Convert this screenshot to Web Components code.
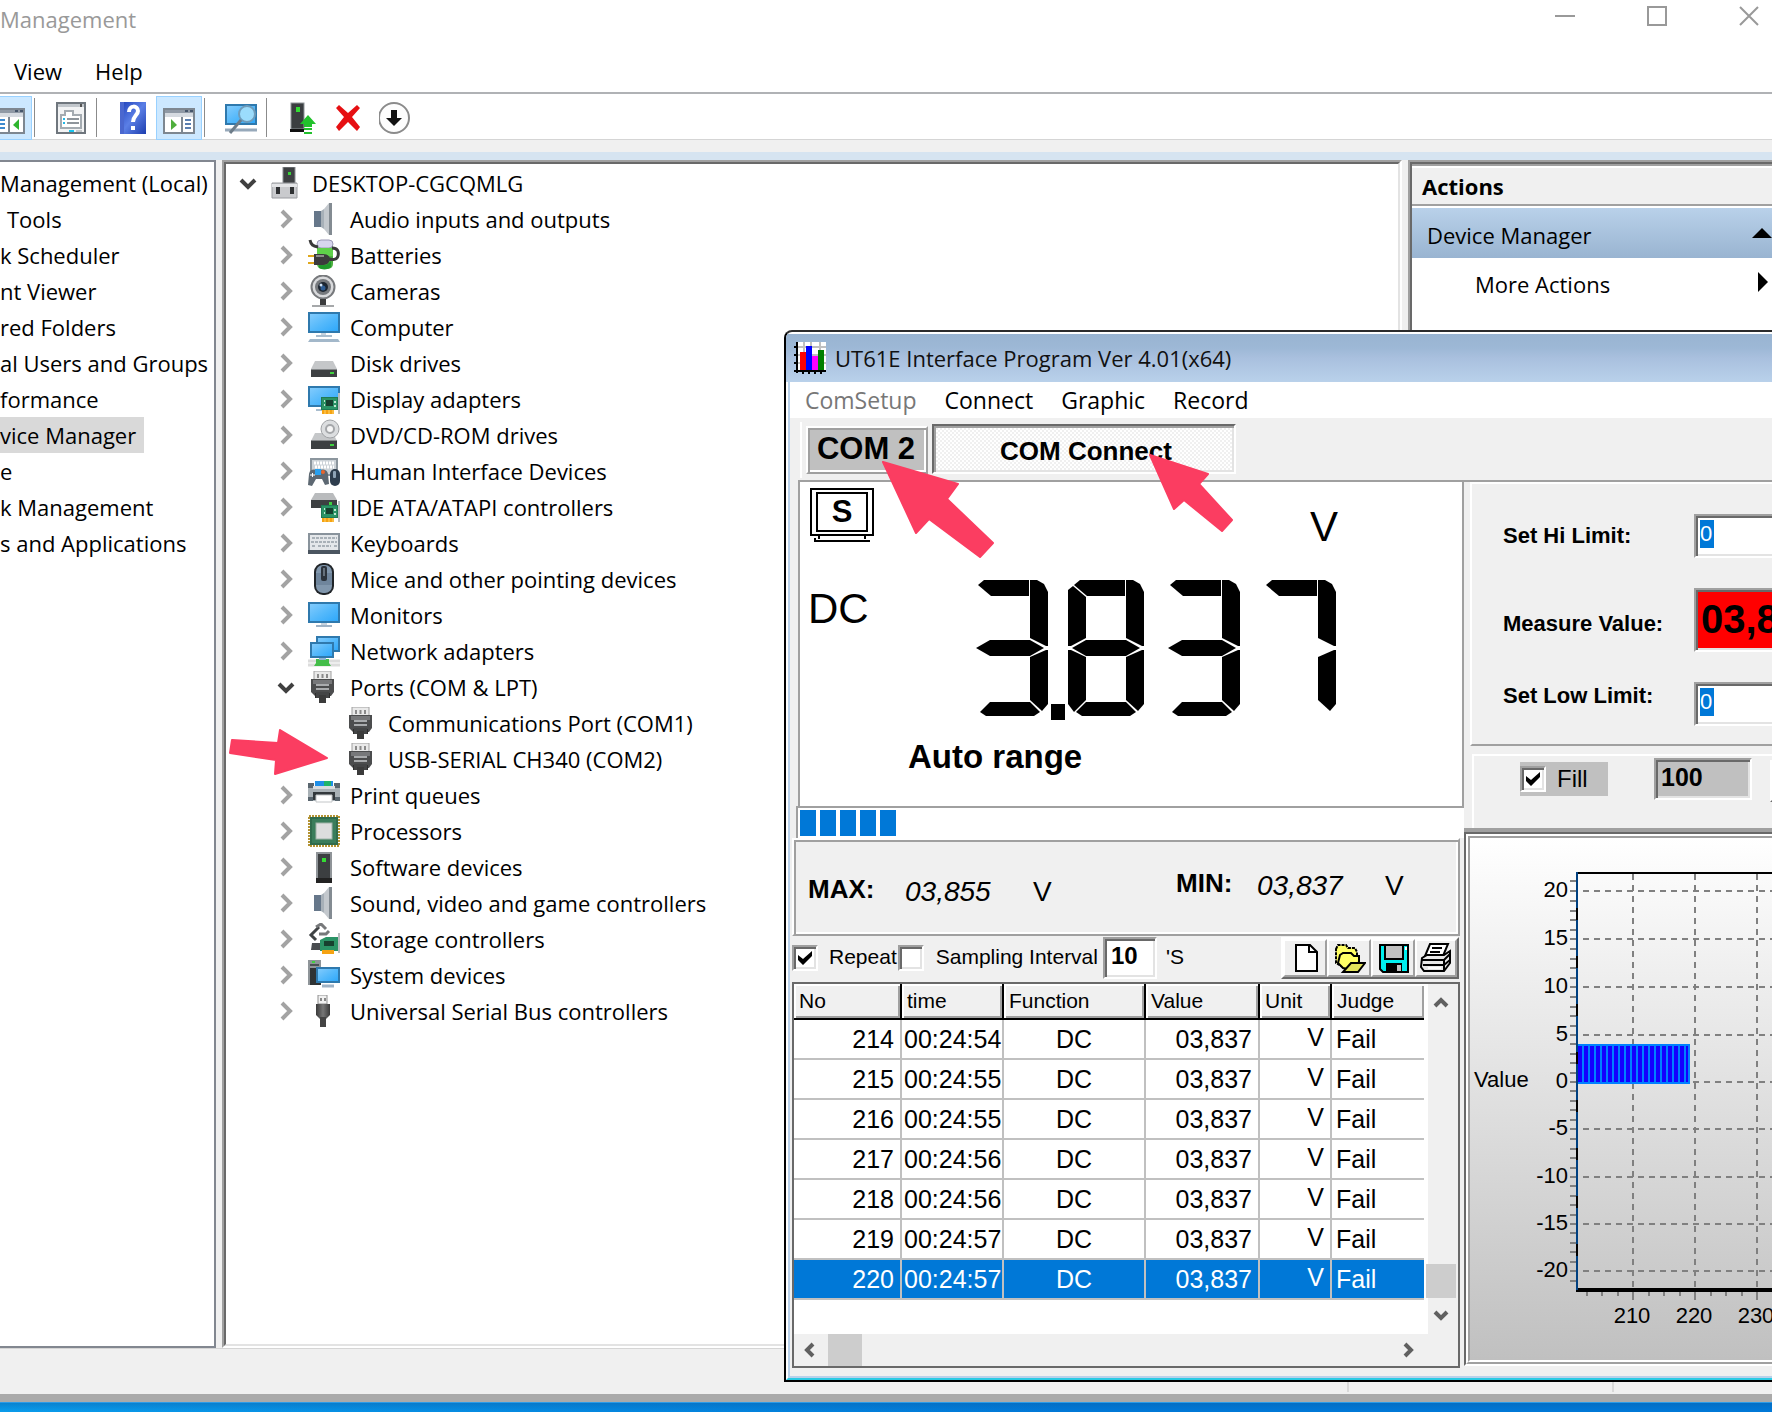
<!DOCTYPE html>
<html lang="en">
<head>
<meta charset="utf-8">
<title>Computer Management</title>
<style>
html, body { margin: 0; height: 100%; overflow: hidden; }
body { font-family: "Open Sans", "Noto Sans", sans-serif; font-size: 22px; color: #000; background: #f0f0f0; }
</style>
</head>
<body>
<desk-top>
  <mmc-window slot="back"></mmc-window>
  <meter-window slot="front"></meter-window>
</desk-top>
<script>
function define(name, html, setup) {
  const t = document.createElement('template');
  customElements.define(name, class extends HTMLElement {
    constructor() { super(); this.attachShadow({ mode: 'open' }); }
    connectedCallback() {
      if (this.shadowRoot.childNodes.length) return;
      t.innerHTML = typeof html === 'function' ? html(this) : html;
      this.shadowRoot.append(t.content.cloneNode(true));
      if (setup) setup(this);
    }
  });
}

/* ---------- icons, all on a 32 x 32 grid ---------- */
const DEFS = `<defs>
<linearGradient id="b" x1="0" y1="0" x2="1" y2="1"><stop offset="0" stop-color="#86cdfd"/><stop offset=".5" stop-color="#55b9fb"/><stop offset="1" stop-color="#2ba6fa"/></linearGradient>
<linearGradient id="g" x1="0" y1="0" x2="1" y2="0"><stop offset="0" stop-color="#6d7a86"/><stop offset=".5" stop-color="#d3d7da"/><stop offset="1" stop-color="#8b9298"/></linearGradient>
<linearGradient id="v" x1="0" y1="0" x2="0" y2="1"><stop offset="0" stop-color="#b4b6b9"/><stop offset="1" stop-color="#e6e7e9"/></linearGradient>
<linearGradient id="k" x1="0" y1="0" x2="1" y2="0"><stop offset="0" stop-color="#3a3a3a"/><stop offset=".5" stop-color="#777"/><stop offset="1" stop-color="#3a3a3a"/></linearGradient>
<linearGradient id="h" x1="0" y1="0" x2="1" y2="1"><stop offset="0" stop-color="#1d3fb8"/><stop offset=".5" stop-color="#5b7fe6"/><stop offset="1" stop-color="#1c3dae"/></linearGradient>
</defs>`;
const card = `<rect x="13" y="14" width="17" height="13" fill="#1f7a53"/><rect x="14" y="15" width="15" height="11" fill="#2b9366"/><rect x="18" y="17" width="7" height="6" fill="#17402f"/><path d="M16 18h1M16 22h1M26 19h2M26 23h2" stroke="#bfe6cf" stroke-width="2"/><rect x="14" y="27" width="12" height="4" fill="#f5a312"/><path d="M17 27v4M21 27v4M25 27v4" stroke="#ffd36a"/><rect x="30" y="10" width="2" height="21" fill="#b8bcbf"/>`;
const plug = `<rect x="6" y="0" width="17" height="9" fill="#e9e9e9" stroke="#a0a0a0"/><path d="M10 3v4M14.500 3v4M19 3v4" stroke="#8a8a8a" stroke-width="2"/><path d="M3 8h23v13l-3 4H7l-4-4z" fill="#4c4d4e"/><path d="M5 9h19v4H5z" fill="#77787a"/><path d="M8 14h13M8 18h13" stroke="#a9abad" stroke-width="2"/><rect x="7" y="22" width="3" height="5" fill="#2e2e2e"/><rect x="19" y="22" width="3" height="5" fill="#2e2e2e"/><rect x="8" y="21" width="13" height="6" fill="#444546"/><rect x="11" y="24" width="7" height="8" fill="#3b3b3b"/>`;
const speaker = `<path d="M6 9h8l10-9v32l-10-9H6z" fill="url(#g)"/><path d="M6 8h7v16H6z" fill="#66778a"/><path d="M13 8l3-2v20l-3-2z" fill="#a7b0b8"/><path d="M16 6l5-6v32l-5-6z" fill="#c3c8cd"/><rect x="21" y="0" width="3" height="32" fill="#838b92"/>`;
const winbox = `<rect x="1" y="7" width="30" height="24" fill="#fff" stroke="#7d8791" stroke-width="2"/><rect x="2" y="8" width="28" height="3" fill="#8f99a5"/><rect x="2" y="11" width="28" height="4" fill="#d5dae0"/><path d="M22 9h3M27 9h3" stroke="#46566b" stroke-width="2"/>`;
const ICONS = {
  pc: `<rect x="13" y="0" width="12" height="17" fill="#3e4143" stroke="#8a8e92"/><rect x="18" y="5" width="3" height="3" fill="#3ad13a"/><path d="M2 16h25v15H2z" fill="#c9cacd" stroke="#9a9ca0"/><path d="M2 17h25v3H2z" fill="#e4e5e7"/><rect x="6" y="20" width="4" height="7" fill="#2f3133"/><rect x="20" y="20" width="4" height="7" fill="#2f3133"/>`,
  speaker,
  battery: `<rect x="9" y="2" width="16" height="28" rx="5" fill="#4caf3f"/><rect x="9" y="1" width="16" height="8" rx="4" fill="#d7d6ee" stroke="#9a98b5"/><path d="M9 9h16v8H9z" fill="#5fd04a"/><path d="M11 24c4 3 8 3 12-2v6c-3 3-9 3-12 1z" fill="#1f9a2b"/><path d="M2 1c1 5 3 6 8 7M24 9c6 0 7 4 6 8s-6 4-9 3" fill="none" stroke="#3a3a3a" stroke-width="3"/><path d="M0 17h7M0 24h7" stroke="#e0a81c" stroke-width="2"/><path d="M6 15h9c5 0 7 3 7 5s-2 6-7 6H6z" fill="#3b3b3c"/><path d="M8 17h8" stroke="#8b8b8b" stroke-width="2"/>`,
  camera: `<circle cx="15" cy="12" r="11.500" fill="#d9dadc" stroke="#77797c" stroke-width="2"/><circle cx="15" cy="12" r="8" fill="#76797d"/><circle cx="15" cy="12" r="5" fill="#1d2631"/><circle cx="15" cy="13" r="2.500" fill="#2e5c93"/><circle cx="13" cy="10" r="1.500" fill="#cfe2f7"/><rect x="12" y="24" width="6" height="6" fill="#3b3c3d"/><path d="M4 31h22" stroke="#a6a8aa" stroke-width="2"/>`,
  computer: `<rect x="1" y="2" width="30" height="19" fill="url(#b)" stroke="#2f79ad" stroke-width="2"/><rect x="13" y="22" width="5" height="2" fill="#c7d3de"/><rect x="8" y="24" width="16" height="2" fill="#a9bdce"/><path d="M2 28h28l2 3H0z" fill="#a3b8ca"/>`,
  disk: `<path d="M7 14h18l4 8H3z" fill="#c5c7c9"/><rect x="3" y="22" width="26" height="8" fill="#3d4042"/><path d="M3 22.500h26" stroke="#85888a"/><rect x="22" y="25" width="4" height="2" fill="#3fd13f"/>`,
  display: `<rect x="1" y="4" width="30" height="19" fill="url(#b)" stroke="#2f79ad" stroke-width="2"/><path d="M8 27h6" stroke="#a9bdce" stroke-width="2"/>${card}`,
  dvd: `<path d="M7 14h18l4 8H3z" fill="#c5c7c9"/><circle cx="22" cy="10" r="9" fill="#dcdee0" stroke="#a1a3a6"/><circle cx="22" cy="10" r="4" fill="#f6f6f6" stroke="#a5a7aa" stroke-width="2"/><rect x="3" y="21" width="26" height="9" fill="#3d4042"/><path d="M3 21.500h26" stroke="#85888a"/><rect x="22" y="25" width="4" height="2" fill="#3fd13f"/>`,
  hid: `<rect x="3" y="4" width="26" height="16" fill="#cdd3d8" stroke="#8c969e" stroke-width="2"/><path d="M6 8h21M7 12h19" stroke="#fff" stroke-width="3" stroke-dasharray="2 1"/><path d="M1 19c1-5 4-5 9-4 5-1 9-1 10 4l1 10-4 1-3-6H8l-4 7-4-1z" fill="#5d6872"/><rect x="7" y="14" width="6" height="6" fill="#2aa0ee"/><circle cx="15" cy="17" r="2" fill="#e8652c"/><path d="M2 20h5M4.500 18v4" stroke="#fff"/><rect x="22" y="14" width="10" height="17" rx="5" fill="#2e3d4d"/><rect x="25" y="16" width="3" height="7" rx="1" fill="#8fa3b5"/>`,
  ide: `<path d="M7 2h18l4 7H3z" fill="#b9bbbd"/><rect x="3" y="9" width="26" height="8" fill="#3d4042"/>${card}<rect x="21" y="11" width="3" height="3" fill="#3fd13f"/>`,
  keyboard: `<rect x="1" y="7" width="30" height="17" fill="#e4e7ea" stroke="#89939c" stroke-width="2"/><path d="M4 11h25M3 15h26M4 19h3M10 19h13M26 19h3" stroke="#a9b1b8" stroke-width="2" stroke-dasharray="3 1"/><rect x="0" y="23" width="32" height="4" fill="#4b5560"/>`,
  mouse: `<rect x="6" y="0" width="20" height="32" rx="9" fill="#202428"/><rect x="8" y="2" width="16" height="28" rx="7" fill="#8197ad"/><path d="M8 10h16v12H8z" fill="#6f859c"/><rect x="13" y="3" width="6" height="15" rx="2" fill="#2c333b"/><rect x="15" y="5" width="2" height="8" fill="#66717c"/>`,
  monitor: `<rect x="1" y="4" width="30" height="19" fill="url(#b)" stroke="#2f79ad" stroke-width="2"/><rect x="13" y="24" width="6" height="2" fill="#c7d3de"/><rect x="8" y="26" width="16" height="2" fill="#9fb3c6"/>`,
  network: `<rect x="9" y="2" width="22" height="14" fill="url(#b)" stroke="#2f79ad" stroke-width="2"/><rect x="3" y="8" width="22" height="14" fill="url(#b)" stroke="#2f79ad" stroke-width="2"/><path d="M0 26h32M0 30h32" stroke="#dcdcdc" stroke-width="3"/><path d="M8 24h13v4l2 3H6l2-3z" fill="#44bd49"/><rect x="11" y="23" width="7" height="2" fill="#8fb3cf"/>`,
  port: plug,
  printer: `<rect x="7" y="2" width="18" height="8" fill="#1f8fe8"/><rect x="16" y="2" width="7" height="8" fill="#1fb56a"/><path d="M0 9h32v13H0z" fill="#a9b1b6"/><path d="M0 4h6v5H0zM26 4h6v5h-6z" fill="#59656e"/><rect x="5" y="7" width="22" height="3" fill="#d9dde0"/><path d="M5 13h22v8H5z" fill="#33383c"/><path d="M8 16h16v7H8z" fill="#fff" stroke="#c3c6c8"/><path d="M0 18h5v4H0zM27 18h5v4h-5z" fill="#59656e"/>`,
  cpu: `<rect x="1" y="1" width="30" height="30" fill="none" stroke="#b49434" stroke-width="2" stroke-dasharray="2 1"/><rect x="2" y="2" width="28" height="28" fill="#2f6b4c"/><rect x="4" y="4" width="24" height="24" fill="#3a7d5b"/><rect x="8" y="8" width="16" height="16" fill="#dcdddd" stroke="#9fb3a8"/>`,
  tower: `<rect x="9" y="2" width="14" height="28" fill="#3c3f41" stroke="#8f9498" stroke-width="2"/><rect x="14" y="7" width="4" height="4" fill="#33dd33"/><path d="M8 27h16v5H8z" fill="#222"/>`,
  storage: `<path d="M11 4l-8 8 5 5" fill="none" stroke="#3f4244" stroke-width="3"/><path d="M8 4l5-3 5 5M11 11h7l3-3" fill="none" stroke="#77797b" stroke-width="3"/><path d="M4 20h10l2 7H3z" fill="#4a4d50"/><path d="M12 17l6-3h12v14H12z" fill="#2b9366"/><path d="M16 18h10v5H16z" fill="#17402f"/><rect x="14" y="27" width="12" height="4" fill="#f5a312"/><rect x="30" y="10" width="2" height="20" fill="#b8bcbf"/>`,
  system: `<rect x="0" y="1" width="13" height="25" fill="#8f9599"/><rect x="2" y="9" width="11" height="17" fill="#2f3335"/><path d="M2 6h9" stroke="#4a4f52" stroke-width="2"/><rect x="4" y="2" width="3" height="2" fill="#3fd13f"/><rect x="9" y="9" width="22" height="14" fill="url(#b)" stroke="#2f79ad" stroke-width="2"/><path d="M14 27h12" stroke="#9fb3c6" stroke-width="3"/>`,
  usb: `<rect x="10" y="0" width="9" height="9" fill="#f1f1f1" stroke="#8f8f8f"/><path d="M13 3v3M17 3v3" stroke="#888" stroke-width="2"/><path d="M8 9h14v11l-4 4h-6l-4-4z" fill="url(#k)"/><rect x="12" y="22" width="6" height="10" fill="#444"/>`,
  /* toolbar */
  showtree: `${winbox}<path d="M16 15v15" stroke="#7d8791" stroke-width="2"/><path d="M5 18h7M5 22h7M5 26h7" stroke="#3e8bd0" stroke-width="2"/><path d="M26 17v11l-6-5z" fill="#2fb52f"/>`,
  props: `<rect x="2" y="1" width="28" height="30" fill="#f2f3f4" stroke="#6f767d" stroke-width="2"/><rect x="3" y="2" width="26" height="3" fill="#c1c6cb"/><path d="M26 2v3" stroke="#555" stroke-width="2"/><path d="M6 13h4v-4h8v4h8v13H6z" fill="#fff" stroke="#a4abb1" stroke-width="2"/><path d="M12 17h12M12 21h12" stroke="#8e959b" stroke-width="2"/><path d="M8 17h2M8 21h2" stroke="#22b8e8" stroke-width="2"/><path d="M14 29h5" stroke="#16c4ee" stroke-width="2"/><path d="M21 29h6" stroke="#c4c7c9" stroke-width="2"/>`,
  help: `<rect x="3" y="0" width="26" height="32" fill="url(#h)"/><path d="M3 0h4v32H3z" fill="#4a67cf"/><path d="M12 10c0-7 9-7 9-1 0 4-5 5-5 11" fill="none" stroke="#fff" stroke-width="4"/><rect x="14" y="24" width="4" height="4" fill="#fff"/>`,
  showact: `${winbox}<path d="M19 15v15" stroke="#7d8791" stroke-width="2"/><path d="M22 18h6M22 22h6M22 26h6" stroke="#5b7fb0" stroke-width="2"/><path d="M8 17v11l6-5z" fill="#4fae3d"/>`,
  scan: `<rect x="1" y="3" width="30" height="19" fill="url(#b)" stroke="#2f79ad" stroke-width="2"/><path d="M0 28h32" stroke="#97a9ba" stroke-width="3"/><circle cx="22" cy="12" r="8" fill="#9bdcfc" stroke="#6e9cbb" stroke-width="2"/><path d="M16 18L5 31" stroke="#6d7c88" stroke-width="3"/>`,
  update: `<rect x="4" y="1" width="13" height="26" fill="#3b3e40" stroke="#8f9498"/><rect x="9" y="5" width="4" height="5" fill="#33dd33"/><path d="M3 27h14v3H3z" fill="#111"/><path d="M21 13l8 9h-4v3h-8v-3h-4z" fill="#22c12c"/><path d="M17 27h8M17 31h8" stroke="#22c12c" stroke-width="2"/>`,
  remove: `<path d="M3 6l3-3 9 8 9-8 3 3-8 9 8 10-3 4-9-9-9 9-3-4 8-10z" fill="#e60f12"/>`,
  disable: `<circle cx="15" cy="16" r="15" fill="#fdfdfd" stroke="#8b8b8b" stroke-width="2"/><path d="M12 8h6v8h5l-8 8-8-8h5z" fill="#111"/>`,
  /* meter program */
  bars: `<rect x="2" y="0" width="30" height="29" fill="#fff"/><path d="M2 5h30M2 13h30M2 21h30M10 0v29M17 0v29M26 0v29" stroke="#c0c0c0" stroke-width="2"/><path d="M6 10h6v18H6z" fill="#f00"/><path d="M12 4h6v24h-6z" fill="#00f"/><path d="M18 14h6v14h-6z" fill="#f0f"/><path d="M24 8h6v20h-6z" fill="#008000"/><path d="M3 0v31M0 29h32M0 5h2M0 13h2M0 21h2M9 30v2M15 30v2M21 30v2M27 30v2" stroke="#000" stroke-width="2"/>`,
  newdoc: `<path d="M6 3h14l7 7v19H6z" fill="#fff" stroke="#000" stroke-width="2"/><path d="M19 3v7h8" fill="none" stroke="#000" stroke-width="2"/>`,
  open: `<path d="M2 7l2-4h8l2 3h7l2 4v6H11l-4 8-5-3z" fill="#ff6" stroke="#000" stroke-width="2" stroke-dasharray="3 1"/><path d="M6 13l3-2h8l3 3h5v6l-7 8-9-2-5-5z" fill="#ff6" stroke="#000" stroke-width="2"/><path d="M17 21h14l-7 9H9z" fill="#e3e35a" stroke="#000" stroke-width="2"/>`,
  save: `<path d="M2 3h28v27H5l-3-3z" fill="#00f0f0" stroke="#000" stroke-width="2"/><rect x="7" y="3" width="18" height="14" fill="#c0c0c0" stroke="#000" stroke-width="2"/><rect x="8" y="21" width="16" height="9" fill="#000"/><rect x="19" y="23" width="4" height="6" fill="#c0c0c0"/><rect x="27" y="5" width="2" height="3" fill="#fff"/>`,
  print: `<path d="M10 2h18l-5 12H5z" fill="#fff" stroke="#000" stroke-width="2"/><path d="M12 6h10M10 10h10" stroke="#000" stroke-width="2"/><path d="M2 16l5-3h17l6-4v12l-6 8H4l-3-4z" fill="#e8e8e8" stroke="#000" stroke-width="2"/><path d="M2 18h22l6-6M3 23h21l6-5M24 18v10" fill="none" stroke="#000" stroke-width="2"/><path d="M8 26h13" stroke="#fff" stroke-width="2"/>`,
  lamp: `<path d="M1 1h62v46H1zM7 5h50v38H7z" fill="none" stroke="#000" stroke-width="2"/><path d="M9 48v3M55 48v3M5 50v3h55" fill="none" stroke="#000" stroke-width="2"/>`
};
define('glyph-icon', el => `<style>:host{display:block;width:32px;height:32px;flex:none}svg{display:block;width:100%;height:100%}</style>
<svg viewBox="0 0 32 32" aria-hidden="true">${DEFS}${ICONS[el.getAttribute('name')] || ''}</svg>`);

/* ---------- desktop ---------- */
define('desk-top', `<style>
:host{display:flex;flex-direction:column;height:100vh;position:relative;overflow:hidden}
.back{flex:1;display:flex;min-height:0}
.edge{height:8px;background:#aaa}
.sky{height:10px;background:linear-gradient(#0b5fa866,#0b5fa800 8px),linear-gradient(90deg,#0a9bea,#0078d7 60%);border-top:1px solid #2b9be8;box-sizing:border-box}
.front{position:absolute;left:784px;right:0;top:330px}
.marks{position:absolute;inset:0;width:100%;height:100%;pointer-events:none}
</style>
<div class="back"><slot name="back"></slot></div>
<div class="edge"></div><div class="sky"></div>
<div class="front"><slot name="front"></slot></div>
<svg class="marks" aria-hidden="true"><g fill="#fb3d61" stroke="#fb3d61" stroke-width="2" stroke-linejoin="round">
<path d="M232 740l46 3 2-13 47 28-52 16 1-14-46-7z"/>
<path d="M883 462l75 22-11 15 46 44-13 14-51-38-13 14z"/>
<path d="M1150 455l58 19-9 10 33 36-10 11-38-31-10 9z"/></g></svg>`);

/* ---------- management console ---------- */
define('tool-button', el => `<style>
:host{display:block}
button{width:46px;height:44px;padding:0 6px;border:1px solid transparent;background:none;display:block}
:host([on]) button{background:#cce8ff;border-color:#99d1ff}
</style><button aria-label="${el.getAttribute('label')}"><glyph-icon name="${el.getAttribute('icon')}"></glyph-icon></button>`);

define('side-item', `<style>
:host{display:flex;height:36px;align-items:center;white-space:nowrap}
span{line-height:36px;padding-right:8px}
:host([indent]) span{padding-left:7px}
:host([selected]) span{background:#d9d9d9}
</style><span><slot></slot></span>`);

define('tree-item', el => {
  const s = el.getAttribute('state');
  const arrow = s === 'open'
    ? '<path d="M3 7l7 7 7-7" fill="none" stroke="#404040" stroke-width="4"/>'
    : s === 'closed' ? '<path d="M6 2l8 8-8 8" fill="none" stroke="#a3a3a3" stroke-width="4"/>' : '';
  return `<style>
:host{display:flex;height:36px;align-items:center;white-space:nowrap;padding-left:calc(38px*var(--level))}
.tog{width:44px;height:36px;border:0;background:none;padding:0;display:grid;place-items:center}
.tog svg{width:20px;height:20px;display:block}
.name{padding-left:10px;line-height:36px}
</style>${arrow ? `<button class="tog" aria-label="Toggle"><svg viewBox="0 0 20 20">${arrow}</svg></button>` : '<span class="tog"></span>'}
<glyph-icon name="${el.getAttribute('icon')}"></glyph-icon><span class="name"><slot></slot></span>`;
}, el => el.style.setProperty('--level', el.getAttribute('level')));

define('actions-pane', `<style>
:host{display:block;border:2px solid #a0a0a0;border-right:0;background:#fff;overflow:hidden}
.in{border:2px solid #696969;border-right:0;border-bottom:0;height:100%}
h2{margin:0;font-size:22px;line-height:40px;height:38px;padding-left:10px;background:#f0f0f0;border-top:2px solid #a0a0a0;border-bottom:2px solid #a0a0a0;box-shadow:inset 0 2px #fff}
.group,.more{display:flex;justify-content:space-between;align-items:center;width:100%;box-sizing:border-box;border:0;font:inherit;color:inherit;background:none;padding:4px 0 0 15px}
.group{height:50px;margin-top:2px;background:linear-gradient(#b9d1ea,#99b4d1)}
.more{height:52px;padding:0 4px 0 63px}
svg{display:block}
</style><div class="in"><h2>Actions</h2>
<button class="group">Device Manager<svg width="20" height="14"><path d="M0 10L10 0l10 10z"/></svg></button>
<button class="more">More Actions<svg width="10" height="24"><path d="M0 0l10 10L0 20z"/></svg></button></div>`);

const TREE = [
  [0, 'open', 'pc', 'DESKTOP-CGCQMLG'], [1, 'closed', 'speaker', 'Audio inputs and outputs'],
  [1, 'closed', 'battery', 'Batteries'], [1, 'closed', 'camera', 'Cameras'],
  [1, 'closed', 'computer', 'Computer'], [1, 'closed', 'disk', 'Disk drives'],
  [1, 'closed', 'display', 'Display adapters'], [1, 'closed', 'dvd', 'DVD/CD-ROM drives'],
  [1, 'closed', 'hid', 'Human Interface Devices'], [1, 'closed', 'ide', 'IDE ATA/ATAPI controllers'],
  [1, 'closed', 'keyboard', 'Keyboards'], [1, 'closed', 'mouse', 'Mice and other pointing devices'],
  [1, 'closed', 'monitor', 'Monitors'], [1, 'closed', 'network', 'Network adapters'],
  [1, 'open', 'port', 'Ports (COM &amp; LPT)'], [2, '', 'port', 'Communications Port (COM1)'],
  [2, '', 'port', 'USB-SERIAL CH340 (COM2)'], [1, 'closed', 'printer', 'Print queues'],
  [1, 'closed', 'cpu', 'Processors'], [1, 'closed', 'tower', 'Software devices'],
  [1, 'closed', 'speaker', 'Sound, video and game controllers'], [1, 'closed', 'storage', 'Storage controllers'],
  [1, 'closed', 'system', 'System devices'], [1, 'closed', 'usb', 'Universal Serial Bus controllers']
];
define('mmc-window', `<style>
:host{display:flex;flex-direction:column;flex:1;min-width:0;background:#f0f0f0}
header{display:flex;justify-content:space-between;height:38px;align-items:center;background:#fff;color:#999}
.sys{display:flex;gap:14px;align-self:flex-start}
.sys button{width:78px;height:32px;border:0;background:none;padding:0;display:grid;place-items:center}
.sys button:last-child{margin-right:-16px}
nav{display:flex;gap:33px;height:42px;padding:12px 14px 0;background:#fff;align-items:center;border-bottom:2px solid #b0b2b5}
nav button{border:0;background:none;padding:0;font:inherit;color:inherit}
.tools{display:flex;background:#fff;height:43px;padding-top:2px;border-bottom:1px solid #d5d5d5}
.tools tool-button:first-child{margin-left:-14px}
.tools i{width:13px;margin-left:2px;border-left:1px solid #8b8b8b;margin-top:2px;margin-bottom:2px}
.band{height:8px;margin-top:12px;background:#d6e4f1}
.panes{flex:1;display:flex;gap:6px;min-height:0}
.side{width:214px;overflow:hidden;background:#fff;border:2px solid #828790;border-left:0;padding-top:3px;box-sizing:content-box}
.tree{flex:1;min-width:0;border:2px solid;border-color:#a0a0a0 #fff #fff #a0a0a0;background:#fff}
.tree div{border:2px solid;border-color:#696969 #e3e3e3 #e3e3e3 #696969;height:100%;box-sizing:border-box;overflow:hidden;padding-top:1px}
actions-pane{width:362px}
footer{height:45px;border-top:1px solid #d5d5d5;display:flex}
footer span{border-right:2px solid #d9d9d9;margin-bottom:2px}
footer span:first-child{width:1347px}footer span:last-child{width:263px}
</style>
<header><span>Management</span><div class="sys">
<button aria-label="Minimize"><svg width="20" height="20"><path d="M0 10h20" stroke="#999" stroke-width="2"/></svg></button>
<button aria-label="Maximize"><svg width="20" height="20"><path d="M1 1h18v18H1z" fill="none" stroke="#999" stroke-width="2"/></svg></button>
<button aria-label="Close"><svg width="20" height="20"><path d="M1 1l18 18M19 1L1 19" stroke="#999" stroke-width="2"/></svg></button></div></header>
<nav><button>View</button><button>Help</button></nav>
<div class="tools">
<tool-button on icon="showtree" label="Show tree"></tool-button><i></i>
<tool-button icon="props" label="Properties"></tool-button><i></i>
<tool-button icon="help" label="Help"></tool-button>
<tool-button on icon="showact" label="Show actions"></tool-button><i></i>
<tool-button icon="scan" label="Scan"></tool-button><i></i>
<tool-button icon="update" label="Update driver"></tool-button>
<tool-button icon="remove" label="Uninstall"></tool-button>
<tool-button icon="disable" label="Disable"></tool-button></div>
<div class="band"></div>
<div class="panes"><div class="side">
<side-item>Management (Local)</side-item><side-item indent>Tools</side-item><side-item>k Scheduler</side-item>
<side-item>nt Viewer</side-item><side-item>red Folders</side-item><side-item>al Users and Groups</side-item>
<side-item>formance</side-item><side-item selected>vice Manager</side-item><side-item>e</side-item>
<side-item>k Management</side-item><side-item>s and Applications</side-item></div>
<div class="tree"><div>${TREE.map(r => `<tree-item level="${r[0]}" state="${r[1]}" icon="${r[2]}">${r[3]}</tree-item>`).join('')}</div></div>
<actions-pane></actions-pane></div>
<footer><span></span><span></span></footer>`);

/* ---------- seven segment readout ---------- */
const SEG = {
  a: '6px 5px,12px 0,57px 0,57px 16px,19px 16px',
  b: '58px 0,65px 0,72px 4px,76px 12px,76px 66px,74px 66px,58px 58px',
  c: '58px 77px,74px 70px,76px 70px,76px 124px,70px 131px,58px 120px',
  d: '18px 122px,58px 122px,68px 132px,62px 136px,14px 136px,8px 132px',
  e: '0 70px,3px 70px,18px 77px,18px 120px,6px 132px,0 124px',
  f: '0 10px,5px 6px,18px 17px,18px 58px,3px 66px,0 66px',
  g: '4px 68px,18px 60px,58px 60px,72px 68px,58px 76px,18px 76px'
};
const ON = { 3: 'abcdg', 8: 'abcdefg', 7: 'abc' };
define('seven-segment', el => `<style>
:host{display:flex;gap:20px}
.digit{display:grid;width:76px;height:140px}
.digit i{grid-area:1/1;background:#000}
.point{width:14px;height:16px;background:#000;margin:124px -17px 0}
${Object.keys(SEG).map(k => `.seg-${k}{clip-path:polygon(${SEG[k]})}`).join('')}
</style>${[...el.getAttribute('value')].map(c => c === '.' ? '<b class="point"></b>' : `<div class="digit">${[...ON[c]].map(s => `<i class="seg-${s}"></i>`).join('')}</div>`).join('')}`,
  el => { el.setAttribute('role', 'img'); el.setAttribute('aria-label', el.getAttribute('value')); });

/* ---------- controls of the meter program ---------- */
const CHECK = `input[type=checkbox]{appearance:none;margin:0;width:26px;height:26px;box-sizing:border-box;background:#fff;border:2px solid;border-color:#a0a0a0 #fff #fff #a0a0a0;box-shadow:inset 2px 2px #696969,inset -2px -2px #e3e3e3;display:grid;place-items:center;flex:none}
input[type=checkbox]:checked::before{content:"";width:14px;height:14px;background:#000;clip-path:polygon(0 4px,5px 8px,14px 0,14px 5px,5px 14px,0 9px)}`;
const SUNK = `border:2px solid;border-color:#a0a0a0 #fff #fff #a0a0a0;box-shadow:inset 2px 2px #696969,inset -2px -2px #e3e3e3;border-radius:0;outline:0;box-sizing:border-box;`;

define('record-table', `<style>
:host{display:grid;grid-template-columns:1fr 32px;grid-template-rows:350px 32px;border:2px solid #696969;background:#f0f0f0}
.view{background:#fff;overflow:hidden}
table{table-layout:fixed;border-collapse:separate;border-spacing:0;width:630px}
th{height:36px;box-sizing:border-box;padding:0 0 0 5px;font-size:21px;font-weight:400;text-align:left;background:#f0f0f0;border-right:2px solid #000;border-bottom:2px solid #000;box-shadow:inset 2px 2px #fff,inset -2px -2px #a0a0a0}
th:last-child{border-right:0}
td{height:40px;box-sizing:border-box;padding:0 6px 0 2px;font-size:25px;border-right:2px solid #c0c0c0;border-bottom:2px solid #c0c0c0;white-space:nowrap;line-height:36px}
td:last-child{border-right:0;padding-left:4px}
.r{text-align:right}
td.c{text-align:center;padding:0 2px}
td.u{padding:0 6px 4px 0;line-height:32px}
.sel td{background:#0078d7;color:#fff}
.v,.h{display:flex;align-items:center;justify-content:space-between}
.v{flex-direction:column;border-left:2px solid #fff;padding:10px 4px 10px 0}
.v svg,.h svg{display:block}
.v b{width:30px;height:34px;background:#cdcdcd;margin-top:auto;margin-bottom:10px}
.h{padding:0 10px 0 8px;justify-content:flex-start;gap:10px}
.h b{width:34px;height:32px;background:#cdcdcd}
.h svg:last-child{margin-left:auto}
path{fill:none;stroke:#606060;stroke-width:4}
</style>
<div class="view"><table><colgroup><col style="width:108px"><col style="width:102px"><col style="width:142px"><col style="width:114px"><col style="width:72px"><col style="width:92px"></colgroup>
<thead><tr><th>No</th><th>time</th><th>Function</th><th>Value</th><th>Unit</th><th>Judge</th></tr></thead><tbody>
${[[214, '00:24:54'], [215, '00:24:55'], [216, '00:24:55'], [217, '00:24:56'], [218, '00:24:56'], [219, '00:24:57'], [220, '00:24:57']].map(r => `<tr${r[0] === 220 ? ' class="sel"' : ''}><td class="r">${r[0]}</td><td>${r[1]}</td><td class="c">DC</td><td class="r">03,837</td><td class="r u">V</td><td>Fail</td></tr>`).join('')}
</tbody></table></div>
<div class="v"><svg width="16" height="16"><path d="M2 12l6-6 6 6"/></svg><b></b><svg width="16" height="16"><path d="M2 4l6 6 6-6"/></svg></div>
<div class="h"><svg width="16" height="16"><path d="M11 2L5 8l6 6"/></svg><b></b><svg width="16" height="16"><path d="M5 2l6 6-6 6"/></svg></div>`);

define('value-chart', () => {
  const ys = [53, 101, 149, 197, 244, 291, 339, 386, 433], xs = [163, 225, 287, 349];
  let g = '', t = '', m = '';
  ys.forEach((y, i) => {
    g += `<path d="M102 ${y}h2000"/>`;
    t += `<text x="98" y="${y + 6}" text-anchor="end">${20 - i * 5}</text>`;
    if (i) for (let k = 1; k < 5; k++) m += `M100 ${Math.round(y - k * 9.5)}h6`;
  });
  m += 'M100 43h6M100 443h6';
  xs.forEach((x, i) => {
    g += `<path d="M${x} 36v416"/>`;
    t += `<text x="${x - 1}" y="485" text-anchor="middle">${210 + i * 10}</text>`;
    m += `M${x} 452v10`;
    [15, 31, 46].forEach(d => m += `M${x - d} 452v6`);
  });
  let bars = '';
  for (let x = 108; x < 214; x += 6) bars += `M${x + 5} 206v40`;
  return `<style>:host{display:block;background:linear-gradient(#fff,#c0c0c0)}
svg{display:block;width:100%;height:522px}text{font-size:22px;fill:#000}</style>
<svg><g stroke="#808080" stroke-width="2" stroke-dasharray="6 5" fill="none">${g}</g>
<path d="${m}M100 53h6M100 101h6M100 149h6M100 197h6M100 244h6M100 291h6M100 339h6M100 386h6M100 433h6" stroke="#808080" stroke-width="2"/>
<path d="M108 206h111v40H108z" fill="#1400ff"/><path d="${bars}M108 207h111v38H108" stroke="#0080ff" stroke-width="2" fill="none"/>
<path d="M106 35h2000" stroke="#000" stroke-width="2"/><path d="M106 452h2000" stroke="#000" stroke-width="4"/>
<path d="M107 34v418" stroke="#000" stroke-width="2"/><path d="M107 34v418" stroke="#004080" stroke-width="2" stroke-dasharray="36 12"/>
${t}<text x="4" y="249">Value</text></svg>`;
});

define('meter-window', `<style>
:host{display:block;border:2px solid #000;border-top-color:#2c2c2c;border-right:0;border-top-left-radius:8px;background:#fff;overflow:hidden;font-family:"Liberation Sans",Arial,sans-serif;white-space:nowrap}
header{display:flex;align-items:center;gap:9px;height:48px;margin-top:2px;padding-left:8px;background:linear-gradient(#99b4d1 0,#9db8d6 14px,#a9c0de 24px,#b9d1ea);font-family:"Open Sans","Noto Sans",sans-serif;font-size:22px;color:#111}
main{border:2px solid #fff;border-right:0;border-top:0;border-bottom:2px solid #2bcbe4}
.body{border-left:2px solid #b9d1ea;border-bottom:2px solid #b9d1ea;background:#f0f0f0}
nav{display:flex;gap:28px;height:36px;align-items:center;background:#fff;padding-left:15px;font-family:"Open Sans","Noto Sans",sans-serif;font-size:23px}
nav button{border:0;background:none;padding:0;font:inherit;color:#000}
nav button:disabled{color:#777}
.bar{display:flex;gap:4px;height:56px;margin:4px 0 2px 10px;border-left:2px solid #fff;padding:2px 0 0 4px;box-sizing:border-box}
.bar button{font-family:inherit;font-weight:700;color:#000;box-sizing:border-box}
.com{width:122px;height:48px;margin-top:2px;padding:0 2px 2px 0;font-size:31px;line-height:40px;background:#c0c0c0;border:2px solid;border-color:#fff #a0a0a0 #a0a0a0 #fff;box-shadow:inset 2px 2px #a0a0a0,inset -2px -2px #fff}
.con{width:304px;height:50px;font-size:26px;padding:4px 0 0 4px;border:2px solid;border-color:#696969 #fff #fff #696969;box-shadow:inset 2px 2px #a0a0a0,inset -2px -2px #e3e3e3;background:repeating-conic-gradient(#fff 0 25%,#f0f0f0 0 50%) 0 0/4px 4px}
.cols{display:flex}
.left{width:674px;flex:none}
.lcd{margin-left:8px;height:326px;box-sizing:border-box;border:2px solid #a0a0a0;border-bottom:0;background:#fff;padding:6px 10px 0 8px;display:grid;grid-template:76px 136px 1fr/160px 1fr}
.lamp{display:grid;width:64px;height:54px;margin-left:2px}
.lamp>*{grid-area:1/1}
.lamp b{text-align:center;font-size:31px;line-height:48px}
.u{font-size:42px;justify-self:end;margin-right:114px;line-height:78px}
.fn{font-size:42px;line-height:48px;margin-top:21px}
seven-segment{margin-left:4px;margin-top:16px}
.range{grid-column:1/3;font-size:33px;font-weight:700;margin:38px 0 0 100px}
.prog{margin-left:6px;height:32px;box-sizing:border-box;border:2px solid #a0a0a0;border-right:0;border-bottom:0;background:#fff;padding:2px;display:flex;gap:4px}
.prog i{width:16px;height:26px;background:#0078d7}
.stats{margin:0 4px 0 2px;height:98px;box-sizing:border-box;border:2px solid;border-color:#fff #a0a0a0 #a0a0a0 #fff;box-shadow:inset 2px 2px #a0a0a0,inset -2px -2px #fff;display:flex;align-items:center;padding-left:14px}
.stats div{display:flex;align-items:center;font-size:28px}
.stats b{font-size:26px;width:97px;padding-bottom:6px}.stats .n b{width:81px}
.stats em{width:128px}
.x{width:368px;padding-top:10px}.n{padding-bottom:2px}
.opts{display:flex;align-items:center;height:46px;padding:0 5px 2px 2px;box-sizing:border-box;font-size:21px}
${CHECK}
.opts label{padding:0 1px 3px 11px}
.opts .l2{padding:0 5px 3px 12px}
.num{${SUNK}width:54px;height:42px;font:700 24px "Liberation Sans",Arial,sans-serif;padding:0 0 4px 6px;background:#fff}
.sec{padding:0 0 3px 9px}
.btns{display:flex;margin-left:auto;height:42px;box-sizing:border-box;border:2px solid;border-color:#fff #696969 #696969 #fff}
.btns button{width:44px;height:38px;padding:0 0 0 5px;border:2px solid;border-color:#fff #a0a0a0 #a0a0a0 #fff;background:#f0f0f0;box-sizing:border-box;display:flex;align-items:center}
.btns button:last-child{width:42px;padding-left:3px}
record-table{margin:0 4px 8px 2px}
.right{flex:1;min-width:0;border-top:2px solid #a0a0a0;overflow:hidden}
.lim{margin-left:6px;height:264px;box-sizing:border-box;border:2px solid #fff;border-right:0;border-bottom-color:#a0a0a0;padding:30px 0 0 31px;display:grid;grid-template:44px 64px 44px/191px 200px;row-gap:30px;align-content:start}
.lim label{font-size:22px;font-weight:700;align-self:center;line-height:28px}
.lim label:nth-of-type(2){padding-top:8px}
.lim label:nth-of-type(3){align-self:start}
.lim input{${SUNK}width:200px;font:22px "Liberation Sans",Arial,sans-serif;padding:0 0 4px 4px;color:#fff;background:linear-gradient(#0078d7,#0078d7) 4px 4px/14px 28px no-repeat #fff}
.lim .mv{background:red;color:#000;font-weight:700;font-size:40px;padding:0 0 2px 5px}
.fillrow{margin:8px 0 0 8px;height:74px;box-sizing:border-box;border:2px solid #fff;border-right:0;border-bottom:0;display:flex;align-items:flex-start;padding:2px 0 0 46px;overflow:hidden}
.fill{display:flex;align-items:center;gap:11px;width:88px;height:34px;background:#c0c0c0;font-size:24px;margin:4px 46px 0 0;flex:none}
.cnt{${SUNK}width:98px;height:42px;font:700 25px "Liberation Sans",Arial,sans-serif;padding:0 0 4px 5px;background:#c0c0c0;flex:none}
.go{margin:2px 0 0 18px;width:60px;height:42px;border:2px solid;border-color:#fff #696969 #696969 #fff;background:#f0f0f0;flex:none}
.c1{border-top:4px solid #a0a0a0;box-shadow:-2px 0 #a0a0a0}
.c2{border:2px solid;border-color:#696969 #696969 #fff #696969;border-right:0}
.c3{border:2px solid;border-color:#fff #fff #a0a0a0 #fff;border-right:0}
.c4{border:2px solid;border-color:#a0a0a0 #a0a0a0 #fff #a0a0a0;border-right:0}
</style>
<header><glyph-icon name="bars"></glyph-icon><span>UT61E Interface Program Ver 4.01(x64)</span></header>
<main><div class="body">
<nav><button disabled>ComSetup</button><button>Connect</button><button>Graphic</button><button>Record</button></nav>
<div class="bar"><button class="com">COM 2</button><button class="con">COM Connect</button></div>
<div class="cols"><div class="left">
<div class="lcd"><div class="lamp"><svg width="64" height="54">${ICONS.lamp}</svg><b>S</b></div><div class="u">V</div>
<div class="fn">DC</div><seven-segment value="3.837"></seven-segment><div class="range">Auto range</div></div>
<div class="prog"><i></i><i></i><i></i><i></i><i></i></div>
<div class="stats"><div class="x"><b>MAX:</b><em>03,855</em><span>V</span></div><div class="n"><b>MIN:</b><em>03,837</em><span>V</span></div></div>
<div class="opts"><input type="checkbox" id="rep" checked><label for="rep">Repeat</label><input type="checkbox" id="smp"><label class="l2" for="smp">Sampling Interval</label><input class="num" value="10" aria-label="Interval"><span class="sec">'S</span>
<div class="btns"><button aria-label="New"><glyph-icon name="newdoc"></glyph-icon></button><button aria-label="Open"><glyph-icon name="open"></glyph-icon></button><button aria-label="Save"><glyph-icon name="save"></glyph-icon></button><button aria-label="Print"><glyph-icon name="print"></glyph-icon></button></div></div>
<record-table></record-table></div>
<div class="right">
<div class="lim"><label for="hi">Set Hi Limit:</label><input id="hi" value="0"><label for="mv">Measure Value:</label><input id="mv" class="mv" value="03,837"><label for="lo">Set Low Limit:</label><input id="lo" value="0"></div>
<div class="fillrow"><div class="fill"><input type="checkbox" id="fl" checked><label for="fl">Fill</label></div><input class="cnt" value="100" aria-label="Count"><button class="go" aria-label="Apply"></button></div>
<div class="c1"><div class="c2"><div class="c3"><div class="c4"><value-chart></value-chart></div></div></div></div>
</div></div></div></main>`);
</script>
</body>
</html>
